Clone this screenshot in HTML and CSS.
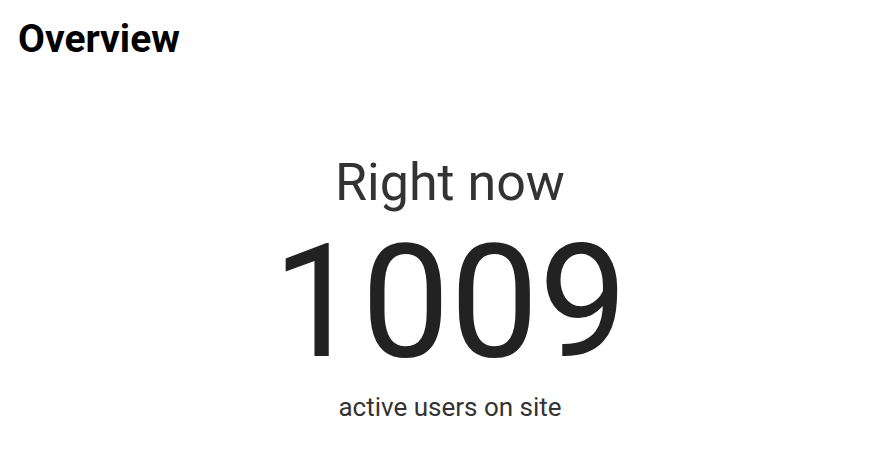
FILE: index.html
```html
<!DOCTYPE html>
<html lang="en">
<head>
  <meta charset="UTF-8" />
  <meta name="viewport" content="width=device-width, initial-scale=1.0"/>
  <title>Overview</title>
  <link rel="stylesheet" href="styles.css">
</head>
<body>

  <h1 class="title">Overview</h1>

  <div class="realtime">
    <div class="label">Right now</div>
    <div class="count">1009</div>
    <div class="caption">active users on site</div>
  </div>

</body>
</html>
```

FILE: styles.css
```css
body {
  margin: 0;
  font-family: Roboto, 'Liberation Sans', sans-serif;
  background: #fff;
  color: #222;
}

.title {
  margin: 0;
  padding: 16px 18px 0;
  font-size: 39px;
  font-weight: 700;
  line-height: 46px;
  color: #000;
}

.realtime {
  display: flex;
  flex-direction: column;
  align-items: center;
  padding: 90px 0 0 10px;
}
.label {
  font-size: 52px;
  line-height: 62px;
  color: #333;
}
.count {
  margin-top: 3px;
  font-size: 158px;
  line-height: 170px;
  color: #222;
}
.caption {
  margin-top: 5px;
  font-size: 26px;
  line-height: 30px;
  color: #333;
}
```
